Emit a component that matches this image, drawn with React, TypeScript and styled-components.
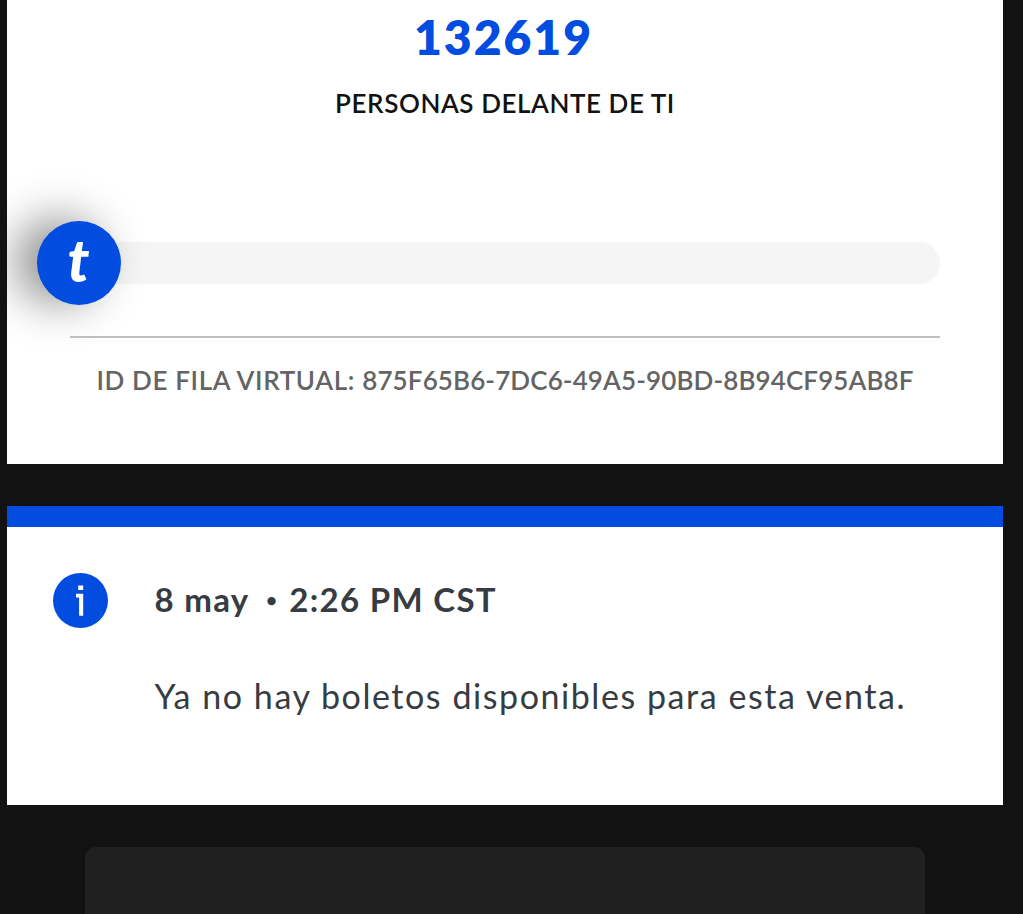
import styled, { createGlobalStyle } from "styled-components";

const GlobalStyle = createGlobalStyle`
  * {
    box-sizing: border-box;
  }
  body {
    margin: 0;
    background: #121212;
    font-family: Lato, "Open Sans", sans-serif;
  }
`;

const App = () => {
  return (
    <>
      <GlobalStyle />
      <Container>
        <QueueCard>
          <Count>132619</Count>
          <CountLabel>PERSONAS DELANTE DE TI</CountLabel>
          <Track>
            <Marker>
              <MarkerLetter>t</MarkerLetter>
            </Marker>
          </Track>
          <Divider />
          <QueueId>
            ID DE FILA VIRTUAL: <QueueCode>875F65B6-7DC6-49A5-90BD-8B94CF95AB8F</QueueCode>
          </QueueId>
        </QueueCard>
        <NoticeCard>
          <InfoIcon viewBox="0 0 56 56">
            <circle cx="27.5" cy="27.5" r="27.5" fill="#024ddf" />
            <path d="M25.2 12.6h5v4.5h-5zM23 20.8h7.2v22h-4.1v-18.3h-3.1z" fill="#fff" />
          </InfoIcon>
          <NoticeText>
            <NoticeDate>
              8 may <Bullet>•</Bullet> 2:26 PM CST
            </NoticeDate>
            <NoticeMessage>Ya no hay boletos disponibles para esta venta.</NoticeMessage>
          </NoticeText>
        </NoticeCard>
        <BottomPanel />
      </Container>
    </>
  );
};

export default App;

const Container = styled.div`
  display: flex;
  flex-direction: column;
  width: 1023px;
  height: 914px;
  padding: 0 20px 0 7px;
  overflow: hidden;
`;

const QueueCard = styled.section`
  display: flex;
  flex-direction: column;
  flex: none;
  height: 464px;
  padding: 7px 63px 0;
  background: #fff;
  overflow: hidden;
  text-align: center;
  white-space: nowrap;
`;

const Count = styled.div`
  padding-right: 3px;
  font-size: 48px;
  line-height: 60px;
  font-weight: 800;
  letter-spacing: 2px;
  color: #024ddf;
`;

const CountLabel = styled.div`
  margin-top: 20px;
  font-size: 26px;
  line-height: 32px;
  font-weight: 600;
  letter-spacing: 0.57px;
  color: #121212;
`;

const Track = styled.div`
  display: flex;
  align-items: center;
  height: 42px;
  margin-top: 123px;
  border-radius: 21px;
  background: #f5f5f5;
`;

const Marker = styled.div`
  display: flex;
  align-items: center;
  justify-content: center;
  flex: none;
  width: 84px;
  height: 84px;
  margin-left: -33px;
  border-radius: 50%;
  background: #024ddf;
  box-shadow: -21px -2px 46px rgba(0, 0, 0, 0.45);
`;

const MarkerLetter = styled.span`
  padding: 0 1px 7px 0;
  font-size: 59px;
  line-height: 77px;
  font-weight: 900;
  font-style: italic;
  color: #fff;
`;

const Divider = styled.hr`
  width: 100%;
  height: 2px;
  margin: 52px 0 0;
  border: 0;
  background: #bfbfbf;
`;

const QueueId = styled.div`
  margin-top: 26px;
  font-size: 26px;
  line-height: 32px;
  font-weight: 600;
  letter-spacing: 0.64px;
  color: #646464;
`;

const QueueCode = styled.span`
  letter-spacing: 0.12px;
`;

const NoticeCard = styled.section`
  display: flex;
  flex: none;
  height: 299px;
  margin-top: 42px;
  padding: 46px;
  border-top: 21px solid #024ddf;
  background: #fff;
`;

const InfoIcon = styled.svg`
  flex: none;
  width: 56px;
  height: 56px;
`;

const NoticeText = styled.div`
  margin-left: 45.5px;
  padding-top: 6px;
  color: #363c42;
  white-space: nowrap;
`;

const NoticeDate = styled.div`
  font-size: 33px;
  line-height: 40px;
  font-weight: 700;
  letter-spacing: 1.3px;
`;

const Bullet = styled.span`
  display: inline-block;
  width: 17px;
  margin-left: 5px;
  font-size: 19px;
  line-height: 20px;
  letter-spacing: 0;
  text-align: center;
  vertical-align: 5px;
`;

const NoticeMessage = styled.div`
  margin-top: 56px;
  font-size: 34px;
  line-height: 42px;
  letter-spacing: 1.56px;
`;

const BottomPanel = styled.div`
  flex: none;
  height: 120px;
  margin: 42px 78px 0;
  border-radius: 11px;
  background: #202020;
`;
